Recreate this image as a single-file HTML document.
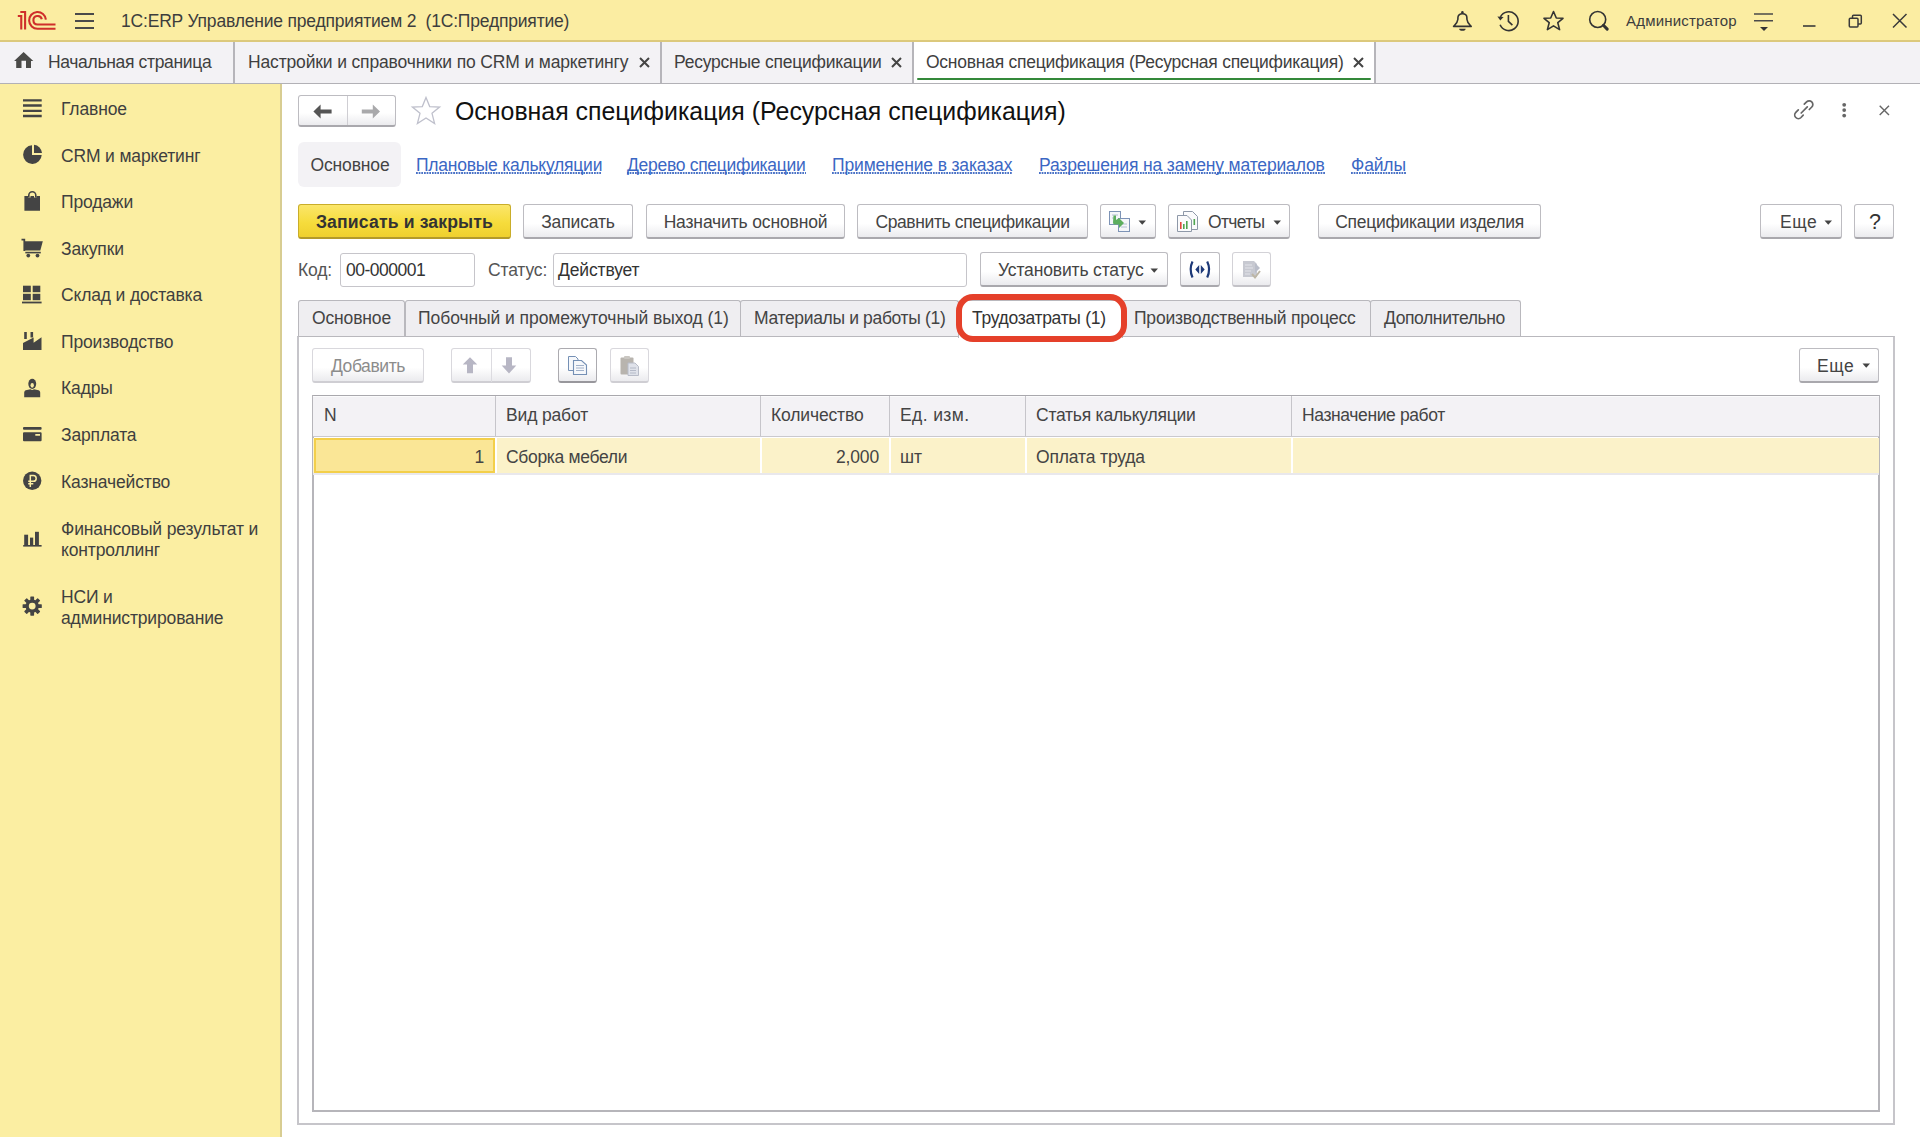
<!DOCTYPE html>
<html><head><meta charset="utf-8">
<style>
*{margin:0;padding:0;box-sizing:border-box}
html,body{width:1920px;height:1137px;overflow:hidden;background:#fff;font-family:"Liberation Sans",sans-serif;font-size:17px;color:#4a4a4a}
.a{position:absolute}
.t{position:absolute;white-space:pre;font-size:17.5px;letter-spacing:-0.15px;margin-top:1px}
svg{position:absolute;overflow:visible}
#top{left:0;top:0;width:1920px;height:42px;background:#fbeda2;border-bottom:2px solid #dcc97c}
#tabs{left:0;top:42px;width:1920px;height:42px;background:linear-gradient(#f3f2f5 0,#f3f2f5 40.7px,#b2b1b6 40.7px,#b2b1b6 42px)}
.sep{position:absolute;top:42px;width:2px;height:41px;background:#b6b5ba}
#side{left:0;top:84px;width:282px;height:1053px;background:#fbeea2;border-right:2px solid #d8cd92}
.sb{position:absolute;left:61px;font-size:17.5px;letter-spacing:-0.15px;margin-top:1px;color:#3f3f3f;white-space:pre;line-height:21px}
.btn{position:absolute;border:1px solid #bdbcc1;border-bottom:2px solid #a9a8ad;border-radius:3px;background:linear-gradient(#ffffff 0%,#ffffff 58%,#ebebee 100%);color:#444;white-space:pre;text-align:center}
.lnk{position:absolute;white-space:pre;color:#3b67c4;background-image:linear-gradient(to right,#4a72c6 50%,transparent 50%);background-size:2.67px 2px;background-repeat:repeat-x;background-position:0 21px}
.inp{position:absolute;border:1px solid #c6c5ca;border-radius:3px;background:#fff}
.ftab{position:absolute;top:300px;height:36px;border:1px solid #b9b8bd;border-bottom:none;border-radius:3px 3px 0 0;background:#efeef1;color:#4a4a4a;white-space:pre;line-height:34px;text-align:center}
.th{position:absolute;top:396px;height:40px;line-height:40px;color:#4a4a4a;white-space:pre}
.cd{position:absolute;width:1px;background:#cfced3}
</style></head><body>
<!-- TOP BAR -->
<div id="top" class="a"></div>
<svg style="left:0;top:0" width="62" height="40" viewBox="0 0 62 40">
  <g fill="none" stroke="#cf2f2a" stroke-width="2.1" stroke-linecap="butt">
    <path d="M17.8 16 H21.25 V29.5"/>
    <path d="M20.3 12 H25.1 V29.5"/>
    <path d="M45.9 19.6 A8.4 8.4 0 1 0 37.65 28.8 H55.5"/>
    <path d="M41.8 19.3 A4.25 4.25 0 1 0 37.5 24.5 H55.5"/>
  </g>
</svg>
<svg style="left:75px;top:13px" width="20" height="16" viewBox="0 0 20 16">
  <g stroke="#4a4a4a" stroke-width="1.8"><path d="M0 1H19M0 8H19M0 15H19"/></g>
</svg>
<div class="t" style="left:121px;top:0;line-height:40px;color:#3d3d3d;letter-spacing:-0.190px">1C:ERP Управление предприятием 2  (1С:Предприятие)</div>

<!-- top right icons -->
<svg style="left:1452px;top:10px" width="22" height="22" viewBox="0 0 22 22">
  <path d="M1.6 16.4 C3.6 14.2 5.6 12.6 5.9 9.2 V7.8 C5.9 5.2 7.6 3.8 10.4 3.8 C13.2 3.8 14.9 5.2 14.9 7.8 V9.2 C15.2 12.6 17.2 14.2 19.2 16.4 Z" fill="none" stroke="#333" stroke-width="1.6" stroke-linejoin="round"/>
  <path d="M7.2 18.7 H13.6 A3.2 2.1 0 0 1 7.2 18.7 Z" fill="#333"/>
  <circle cx="10.4" cy="2.4" r="1.3" fill="#333"/>
</svg>
<svg style="left:1497px;top:10px" width="23" height="22" viewBox="0 0 23 22">
  <path d="M3.4 6.9 A9.4 9.4 0 1 1 3.1 14.8" fill="none" stroke="#333" stroke-width="1.6"/>
  <path d="M0.4 6.4 L6.6 6.9 L3.3 10.4 Z" fill="#333"/>
  <path d="M11.4 5 V11.4 L15.4 15.2" fill="none" stroke="#333" stroke-width="1.6"/>
</svg>
<svg style="left:1542px;top:10px" width="23" height="22" viewBox="0 0 23 22">
  <path d="M11.5 1.5 L14.3 8 L21 8.3 L15.8 12.7 L17.6 19.6 L11.5 15.9 L5.4 19.6 L7.2 12.7 L2 8.3 L8.7 8 Z" fill="none" stroke="#333" stroke-width="1.6" stroke-linejoin="round"/>
</svg>
<svg style="left:1588px;top:10px" width="22" height="22" viewBox="0 0 22 22">
  <circle cx="9.7" cy="9.5" r="8" fill="none" stroke="#333" stroke-width="1.6"/>
  <path d="M15.4 15.3 L19.2 19.1" stroke="#333" stroke-width="3" stroke-linecap="round"/>
</svg>
<div class="t" style="left:1626px;top:0;line-height:40px;font-size:15px;letter-spacing:0.2px;color:#3d3d3d">Администратор</div>
<svg style="left:1754px;top:12px" width="20" height="20" viewBox="0 0 20 20">
  <path d="M0 2H19M0 8.8H19" stroke="#4a4a4a" stroke-width="1.6"/>
  <path d="M6 15 H14 L10 19 Z" fill="#333"/>
</svg>
<svg style="left:1803px;top:24px" width="14" height="4"><path d="M0 2H12.5" stroke="#3a3a3a" stroke-width="1.6"/></svg>
<svg style="left:1848px;top:14px" width="15" height="15" viewBox="0 0 15 15">
  <rect x="1.3" y="4.3" width="8.7" height="8.7" rx="1" fill="none" stroke="#3a3a3a" stroke-width="1.5"/>
  <path d="M4.5 4.3 V2.3 a1 1 0 0 1 1-1 H12.3 a1 1 0 0 1 1 1 V9 a1 1 0 0 1-1 1 H10" fill="none" stroke="#3a3a3a" stroke-width="1.5"/>
</svg>
<svg style="left:1892px;top:13px" width="16" height="16" viewBox="0 0 16 16">
  <path d="M1 1L14.5 14.5M14.5 1L1 14.5" stroke="#3a3a3a" stroke-width="1.5"/>
</svg>

<!-- TAB BAR -->
<div id="tabs" class="a"></div>
<div class="a" style="left:913px;top:42px;width:462px;height:40.7px;background:#fff"></div>
<div class="sep" style="left:233px"></div>
<div class="sep" style="left:660px"></div>
<div class="sep" style="left:912px"></div>
<div class="sep" style="left:1374px"></div>
<svg style="left:14px;top:51px" width="20" height="18" viewBox="0 0 20 18">
  <path d="M9.6 1.1 L19.3 10 H17 V16.9 H12 V9.8 H7.5 V16.9 H2.2 V10 H0.1 Z" fill="#4a4a48"/>
</svg>
<div class="t" style="left:48px;top:41px;line-height:40px;color:#3f3f3f;letter-spacing:-0.330px">Начальная страница</div>
<div class="t" style="left:248px;top:41px;line-height:40px;color:#3f3f3f">Настройки и справочники по CRM и маркетингу</div>
<div class="t" style="left:674px;top:41px;line-height:40px;color:#3f3f3f;letter-spacing:-0.23px">Ресурсные спецификации</div>
<div class="t" style="left:926px;top:41px;line-height:40px;color:#3f3f3f;letter-spacing:-0.257px">Основная спецификация (Ресурсная спецификация)</div>
<svg style="left:639px;top:57px" width="11" height="11" viewBox="0 0 11 11"><path d="M1 1L10 10M10 1L1 10" stroke="#444" stroke-width="2"/></svg>
<svg style="left:891px;top:57px" width="11" height="11" viewBox="0 0 11 11"><path d="M1 1L10 10M10 1L1 10" stroke="#444" stroke-width="2"/></svg>
<svg style="left:1353px;top:57px" width="11" height="11" viewBox="0 0 11 11"><path d="M1 1L10 10M10 1L1 10" stroke="#444" stroke-width="2"/></svg>
<div class="a" style="left:917px;top:77.5px;width:454px;height:2.6px;border-radius:2px;background:#34893a"></div>

<!-- SIDEBAR -->
<div id="side" class="a"></div>
<!-- Главное -->
<svg style="left:23px;top:98px" width="19" height="20" viewBox="0 0 19 20"><path d="M0 2.3H18.7M0 7.5H18.7M0 12.8H18.7M0 18H18.7" stroke="#444" stroke-width="2.3"/></svg>
<div class="sb" style="top:98px">Главное</div>
<!-- CRM -->
<svg style="left:22px;top:144px" width="21" height="21" viewBox="0 0 21 21">
  <path d="M10 1.3 A9.3 9.3 0 1 0 19.7 11 H10 Z" fill="#444"/>
  <path d="M12 0.7 A9 9 0 0 1 20 9 H12 Z" fill="#444"/>
</svg>
<div class="sb" style="top:145px">CRM и маркетинг</div>
<!-- Продажи -->
<svg style="left:24px;top:190px" width="17" height="22" viewBox="0 0 17 22">
  <path d="M0.4 6 H4 V7.5 H6.5 V6 H10 V7.5 H12.5 V6 H16 V20.7 H0.4 Z" fill="#444"/>
  <path d="M4.8 7.5 V5.3 A3.5 3.5 0 0 1 11.8 5.3 V7.5" fill="none" stroke="#444" stroke-width="1.6"/>
</svg>
<div class="sb" style="top:191px">Продажи</div>
<!-- Закупки -->
<svg style="left:21px;top:238px" width="23" height="21" viewBox="0 0 23 21">
  <path d="M0.5 1.6 H3.3 V13" fill="none" stroke="#444" stroke-width="1.8"/>
  <path d="M3.3 3.2 H21.8 L19.3 12.6 H3.3 Z" fill="#444"/>
  <path d="M4.3 14.6 H19.8" stroke="#444" stroke-width="1.6"/>
  <circle cx="7.3" cy="17.6" r="1.9" fill="#444"/><circle cx="16.5" cy="17.6" r="1.9" fill="#444"/>
</svg>
<div class="sb" style="top:238px">Закупки</div>
<!-- Склад -->
<svg style="left:22px;top:285px" width="21" height="19" viewBox="0 0 21 19">
  <rect x="1" y="0.7" width="7.8" height="6.5" fill="#444"/><rect x="10.7" y="0.7" width="7.6" height="6.5" fill="#444"/>
  <rect x="1" y="8.8" width="7.8" height="6.4" fill="#444"/><rect x="10.7" y="8.8" width="7.6" height="6.4" fill="#444"/>
  <path d="M0 17.5 H19.6" stroke="#444" stroke-width="1.8"/>
</svg>
<div class="sb" style="top:284px">Склад и доставка</div>
<!-- Производство -->
<svg style="left:22px;top:331px" width="21" height="20" viewBox="0 0 21 20">
  <rect x="2.2" y="1" width="2.6" height="7" fill="#444"/><rect x="8.5" y="1" width="2.6" height="5.5" fill="#444"/>
  <path d="M1 12 L11.6 6.4 V11.8 L19.5 6.3 V19 H1 Z" fill="#444"/>
</svg>
<div class="sb" style="top:331px">Производство</div>
<!-- Кадры -->
<svg style="left:23px;top:378px" width="19" height="20" viewBox="0 0 19 20">
  <ellipse cx="9.25" cy="5.8" rx="3.95" ry="5.1" fill="#444"/>
  <ellipse cx="9.2" cy="7.3" rx="1.7" ry="2.4" fill="#f7eaa2"/>
  <path d="M1.2 19.2 V14.6 Q1.2 12.3 4 11.9 L7.4 11.3 Q9.2 12.9 11 11.3 L14.4 11.9 Q17.2 12.3 17.2 14.6 V19.2 Z" fill="#444"/>
</svg>
<div class="sb" style="top:377px">Кадры</div>
<!-- Зарплата -->
<svg style="left:22px;top:426px" width="21" height="17" viewBox="0 0 21 17">
  <rect x="1" y="1" width="18.6" height="2.8" rx="1" fill="#444"/>
  <path d="M2 6.3 H18.6 A1 1 0 0 1 19.6 7.3 V14.3 A1 1 0 0 1 18.6 15.3 H2 A1 1 0 0 1 1 14.3 V7.3 A1 1 0 0 1 2 6.3 Z M13.3 8 V9.8 H18 V8 Z" fill="#444" fill-rule="evenodd"/>
</svg>
<div class="sb" style="top:424px">Зарплата</div>
<!-- Казначейство -->
<svg style="left:22px;top:471px" width="21" height="21" viewBox="0 0 21 21">
  <circle cx="10.2" cy="9.8" r="9.2" fill="#444"/>
  <path d="M8.3 16 V4.5 H11.3 A2.9 2.9 0 0 1 11.3 10.3 H6.2 M6.2 12.8 H11.3" fill="none" stroke="#fbeea2" stroke-width="1.5"/>
</svg>
<div class="sb" style="top:471px">Казначейство</div>
<!-- Финансовый -->
<svg style="left:22px;top:530px" width="21" height="18" viewBox="0 0 21 18">
  <rect x="2.2" y="4.7" width="3.9" height="10.8" fill="#444"/>
  <rect x="8" y="7.6" width="3.2" height="7.9" fill="#444"/>
  <rect x="13" y="1.8" width="3.9" height="13.7" fill="#444"/>
  <rect x="1.2" y="15" width="18.4" height="1.6" fill="#444"/>
</svg>
<div class="sb" style="top:518px">Финансовый результат и
контроллинг</div>
<!-- НСИ -->
<svg style="left:22px;top:596px" width="21" height="21" viewBox="0 0 21 21">
  <g fill="#444" transform="translate(10.2 10.1)">
    <circle r="6.6"/>
    <rect x="-1.9" y="-9.6" width="3.8" height="19.2" rx="0.6"/>
    <rect x="-1.9" y="-9.6" width="3.8" height="19.2" rx="0.6" transform="rotate(45)"/>
    <rect x="-1.9" y="-9.6" width="3.8" height="19.2" rx="0.6" transform="rotate(90)"/>
    <rect x="-1.9" y="-9.6" width="3.8" height="19.2" rx="0.6" transform="rotate(135)"/>
  </g>
  <circle cx="10.2" cy="10.1" r="3.4" fill="#fbeea2"/>
</svg>
<div class="sb" style="top:586px">НСИ и
администрирование</div>


<!-- FORM HEADER -->
<div class="btn" style="left:298px;top:95px;width:98px;height:32px"></div>
<div class="a" style="left:347px;top:96px;width:1px;height:29px;background:#cfced3"></div>
<svg style="left:313px;top:104px" width="20" height="15" viewBox="0 0 20 15"><path d="M0.4 7.5 L7.6 0.4 V5.4 H18.6 V9.6 H7.6 V14.6 Z" fill="#555"/></svg>
<svg style="left:361px;top:104px" width="20" height="15" viewBox="0 0 20 15"><path d="M19 7.5 L11.8 0.4 V5.4 H0.8 V9.6 H11.8 V14.6 Z" fill="#a9a9ab"/></svg>
<svg style="left:410px;top:96px" width="33" height="30" viewBox="0 0 33 30">
  <path d="M16 1.5 L19.7 10.6 L29.6 11 L22 17.3 L24.6 27.6 L16 22 L7.4 27.6 L10 17.3 L2.4 11 L12.3 10.6 Z" fill="none" stroke="#bfc0cc" stroke-width="1.3" stroke-linejoin="miter"/>
</svg>
<div class="t" style="left:455px;top:89.5px;line-height:40px;font-size:24.9px;letter-spacing:0;color:#111">Основная спецификация (Ресурсная спецификация)</div>
<svg style="left:1793px;top:99px" width="23" height="22" viewBox="0 0 23 22">
  <path d="M11.3 5.2 L13.6 2.9 A3.6 3.6 0 0 1 18.8 8 L16.3 10.5" fill="none" stroke="#666" stroke-width="1.7" stroke-linecap="round"/>
  <path d="M10.2 16.2 L8 18.5 A3.6 3.6 0 0 1 2.8 13.3 L5.3 10.8" fill="none" stroke="#666" stroke-width="1.7" stroke-linecap="round"/>
  <path d="M8.2 14 L14.3 7.9" stroke="#666" stroke-width="1.7" stroke-linecap="round"/>
</svg>
<svg style="left:1840px;top:101px" width="8" height="18" viewBox="0 0 8 18"><g fill="#666"><circle cx="4.2" cy="3.8" r="1.9"/><circle cx="4.2" cy="9.1" r="1.9"/><circle cx="4.2" cy="14.6" r="1.9"/></g></svg>
<svg style="left:1879px;top:105px" width="11" height="11" viewBox="0 0 11 11"><path d="M0.7 0.7L10 10M10 0.7L0.7 10" stroke="#666" stroke-width="1.4"/></svg>

<!-- section links -->
<div class="a" style="left:298px;top:142px;width:103px;height:45px;border-radius:6px;background:#f3f2f5"></div>
<div class="t" style="left:310.5px;top:144px;line-height:40px;color:#444">Основное</div>
<div class="lnk t" style="left:416px;top:144px;line-height:40px;background-position:0 27px;letter-spacing:-0.240px">Плановые калькуляции</div>
<div class="lnk t" style="left:627px;top:144px;line-height:40px;background-position:0 27px;letter-spacing:-0.290px">Дерево спецификации</div>
<div class="lnk t" style="left:832px;top:144px;line-height:40px;background-position:0 27px">Применение в заказах</div>
<div class="lnk t" style="left:1039px;top:144px;line-height:40px;background-position:0 27px">Разрешения на замену материалов</div>
<div class="lnk t" style="left:1351px;top:144px;line-height:40px;background-position:0 27px">Файлы</div>

<!-- command bar -->
<div class="btn" style="left:298px;top:204px;width:213px;height:35px;background:linear-gradient(#fbe66a 0%,#f6dc3c 55%,#efd02e 100%);border-color:#c9ad2a;border-bottom-color:#b39a2a"></div>
<div class="t" style="left:298px;top:205px;width:213px;line-height:33px;text-align:center;font-weight:bold;font-size:17.6px;color:#333;letter-spacing:0.150px">Записать и закрыть</div>
<div class="btn" style="left:523px;top:204px;width:110px;height:35px"></div>
<div class="t" style="left:523px;top:205px;width:110px;line-height:33px;text-align:center;color:#444">Записать</div>
<div class="btn" style="left:646px;top:204px;width:199px;height:35px"></div>
<div class="t" style="left:646px;top:205px;width:199px;line-height:33px;text-align:center;color:#444">Назначить основной</div>
<div class="btn" style="left:857px;top:204px;width:231px;height:35px"></div>
<div class="t" style="left:857px;top:205px;width:231px;line-height:33px;text-align:center;color:#444;letter-spacing:-0.375px">Сравнить спецификации</div>
<div class="btn" style="left:1100px;top:204px;width:56px;height:35px"></div>
<svg style="left:1108px;top:210px" width="24" height="23" viewBox="0 0 24 23">
  <rect x="1.5" y="1.5" width="11" height="13" fill="#f4f6fa" stroke="#7d93b6" stroke-width="1"/>
  <rect x="10.5" y="8.5" width="11" height="13" fill="#f4f6fa" stroke="#7d93b6" stroke-width="1"/>
  <path d="M13 14 h6 M13 17 h6 M4 5 h6 M4 8 h4" stroke="#a5b3c9" stroke-width="0.8"/>
  <path d="M5.5 5.5 L8 5.5 L8 10 L11 8 L16 13 L11 18 L11 14.5 L6.5 14.5 Q5 14.5 5 12.5 Z" fill="#5cae5e"/>
</svg>
<svg style="left:1138px;top:220px" width="9" height="6" viewBox="0 0 9 6"><path d="M0.5 0.5 H8 L4.25 4.8 Z" fill="#444"/></svg>
<div class="btn" style="left:1168px;top:204px;width:122px;height:35px"></div>
<svg style="left:1176px;top:210px" width="24" height="23" viewBox="0 0 24 23">
  <path d="M7.5 1.5 H16.5 L21.5 6.5 V19.5 H7.5 Z" fill="#fbfbfc" stroke="#8e98a8" stroke-width="1"/>
  <path d="M1.5 5.5 H11 L15.5 10 V21.5 H1.5 Z" fill="#fbfbfc" stroke="#8e98a8" stroke-width="1"/>
  <rect x="4" y="12" width="1.6" height="7" fill="#e2473a"/>
  <rect x="7" y="14" width="1.6" height="5" fill="#4fa64f"/>
  <rect x="10" y="11" width="1.6" height="8" fill="#4fa64f"/>
  <rect x="17.5" y="9" width="1.6" height="6" fill="#4fa64f"/>
</svg>
<div class="t" style="left:1208px;top:205px;line-height:33px;color:#444;letter-spacing:-0.690px">Отчеты</div>
<svg style="left:1273px;top:220px" width="9" height="6" viewBox="0 0 9 6"><path d="M0.5 0.5 H8 L4.25 4.8 Z" fill="#444"/></svg>
<div class="btn" style="left:1318px;top:204px;width:223px;height:35px"></div>
<div class="t" style="left:1318px;top:205px;width:223px;line-height:33px;text-align:center;color:#444;letter-spacing:-0.276px">Спецификации изделия</div>
<div class="btn" style="left:1760px;top:204px;width:82px;height:35px"></div>
<div class="t" style="left:1780px;top:205px;line-height:33px;color:#444;letter-spacing:0.6px">Еще</div>
<svg style="left:1824px;top:220px" width="9" height="6" viewBox="0 0 9 6"><path d="M0.5 0.5 H8 L4.25 4.8 Z" fill="#444"/></svg>
<div class="btn" style="left:1854px;top:204px;width:40px;height:35px"></div>
<div class="t" style="left:1855px;top:205px;width:40px;line-height:33px;text-align:center;color:#333;font-size:21.5px;letter-spacing:0">?</div>

<!-- fields -->
<div class="t" style="left:298px;top:252px;line-height:35px;color:#555">Код:</div>
<div class="inp" style="left:340px;top:253px;width:135px;height:34px"></div>
<div class="t" style="left:346px;top:252px;line-height:35px;color:#333;letter-spacing:-0.500px">00-000001</div>
<div class="t" style="left:488px;top:252px;line-height:35px;color:#555">Статус:</div>
<div class="inp" style="left:553px;top:253px;width:414px;height:34px"></div>
<div class="t" style="left:558px;top:252px;line-height:35px;color:#333">Действует</div>
<div class="btn" style="left:980px;top:252px;width:188px;height:35px"></div>
<div class="t" style="left:998px;top:253px;line-height:33px;color:#444">Установить статус</div>
<svg style="left:1150px;top:268px" width="9" height="6" viewBox="0 0 9 6"><path d="M0.5 0.5 H8 L4.25 4.8 Z" fill="#444"/></svg>
<div class="btn" style="left:1180px;top:252px;width:40px;height:35px"></div>
<svg style="left:1188px;top:260px" width="24" height="19" viewBox="0 0 24 19">
  <path d="M4.5 1.5 Q0.8 9.3 4.5 17.5 M19.2 1.5 Q23 9.3 19.2 17.5" fill="none" stroke="#1d3978" stroke-width="2.2"/>
  <path d="M11.2 5 L7.3 9.5 L11.2 14 Z M12.8 5 L16.7 9.5 L12.8 14 Z" fill="#1d3978"/>
</svg>
<div class="btn" style="left:1232px;top:252px;width:39px;height:35px;border-color:#d3d2d7;border-bottom-color:#c3c2c7"></div>
<svg style="left:1241px;top:259px" width="21" height="21" viewBox="0 0 21 21">
  <path d="M2 2 H13 L16 5 V18 H2 Z" fill="#c7c9d1"/>
  <path d="M4 6 H11 M4 9 H12 M4 12 H10 M4 15 H9" stroke="#e3e4ea" stroke-width="1"/>
  <path d="M14 4 L19 9 L14 14 Z" fill="#b9bdc9"/>
  <path d="M11 15 L14 18.5 L19 12" fill="none" stroke="#bdb6a6" stroke-width="2"/>
</svg>

<!-- form tabs -->
<div class="a" style="left:297px;top:336px;width:1598px;height:789px;border:2px solid #c6c5ca;border-top:1px solid #b9b8bd"></div>
<div class="ftab" style="left:298px;width:107px"></div>
<div class="t" style="left:312px;top:300px;line-height:34px;color:#444">Основное</div>
<div class="ftab" style="left:405px;width:336px"></div>
<div class="t" style="left:418px;top:300px;line-height:34px;color:#444;letter-spacing:-0.065px">Побочный и промежуточный выход (1)</div>
<div class="ftab" style="left:740px;width:219px"></div>
<div class="t" style="left:754px;top:300px;line-height:34px;color:#444;letter-spacing:-0.340px">Материалы и работы (1)</div>
<div class="ftab" style="left:958px;width:165px;height:38px;background:#fff"></div>
<div class="t" style="left:972px;top:300px;line-height:34px;color:#333;letter-spacing:-0.300px">Трудозатраты (1)</div>
<div class="ftab" style="left:1122px;width:249px"></div>
<div class="t" style="left:1134px;top:300px;line-height:34px;color:#444;letter-spacing:-0.210px">Производственный процесс</div>
<div class="ftab" style="left:1370px;width:151px"></div>
<div class="t" style="left:1384px;top:300px;line-height:34px;color:#444;letter-spacing:-0.390px">Дополнительно</div>
<div class="a" style="left:955.5px;top:293.5px;width:171px;height:48px;border:6.5px solid #e5402a;border-radius:17px"></div>

<!-- toolbar -->
<div class="btn" style="left:312px;top:348px;width:112px;height:35px;border-color:#d9d8dd;border-bottom-color:#cfced3"></div>
<div class="t" style="left:312px;top:348px;width:112px;line-height:34px;text-align:center;color:#8c8c8c;letter-spacing:-0.390px">Добавить</div>
<div class="btn" style="left:451px;top:348px;width:80px;height:35px;border-color:#d9d8dd;border-bottom-color:#cfced3"></div>
<div class="a" style="left:491px;top:349px;width:1px;height:33px;background:#dcdbe0"></div>
<svg style="left:462px;top:357px" width="16" height="17" viewBox="0 0 16 17"><path d="M8 0.3 L15.3 7.5 H11 V16.3 H5 V7.5 H0.7 Z" fill="#b7b6c4"/></svg>
<svg style="left:501px;top:357px" width="16" height="17" viewBox="0 0 16 17"><path d="M8 16.5 L15.3 8.5 H11 V0.3 H5 V8.5 H0.7 Z" fill="#b7b6c4"/></svg>
<div class="btn" style="left:558px;top:348px;width:39px;height:35px;border-color:#acabb0;border-bottom-color:#98979c"></div>
<svg style="left:567px;top:355px" width="21" height="21" viewBox="0 0 21 21">
  <path d="M1.5 1.5 H8.5 L11 4 V15.5 H1.5 Z" fill="#f6f8fb" stroke="#7590b5" stroke-width="1"/>
  <path d="M6.5 5.5 H14.5 L19.5 10 V19.5 H6.5 Z" fill="#f6f8fb" stroke="#7590b5" stroke-width="1.1"/>
  <path d="M9 10.5 H17 M9 13 H17 M9 15.5 H17" stroke="#98a9c4" stroke-width="0.9"/>
</svg>
<div class="btn" style="left:610px;top:348px;width:39px;height:35px;border-color:#d9d8dd;border-bottom-color:#cfced3"></div>
<svg style="left:619px;top:355px" width="21" height="22" viewBox="0 0 21 22">
  <rect x="1.5" y="2.5" width="13" height="17" rx="1" fill="#b8b4ae"/>
  <rect x="5" y="1" width="6" height="3" rx="1" fill="#c9c6c1"/>
  <path d="M9 8 H16 L19.5 11.5 V20.5 H9 Z" fill="#dfe2ea" stroke="#b8bcc8" stroke-width="1"/>
  <path d="M11 13 H17 M11 15.5 H17 M11 18 H17" stroke="#b0b5c4" stroke-width="0.9"/>
</svg>
<div class="btn" style="left:1799px;top:348px;width:80px;height:35px"></div>
<div class="t" style="left:1817px;top:348px;line-height:34px;color:#444;letter-spacing:0.6px">Еще</div>
<svg style="left:1862px;top:363px" width="9" height="6" viewBox="0 0 9 6"><path d="M0.5 0.5 H8 L4.25 4.8 Z" fill="#444"/></svg>

<!-- table -->
<div class="a" style="left:312px;top:395px;width:1568px;height:717px;border:2px solid #b6b5ba;border-top:1px solid #a9a8ad"></div>
<div class="a" style="left:313px;top:396px;width:1566px;height:41px;background:#f3f2f5;border-top:1px solid #fbfbfc;border-bottom:1px solid #cac9ce"></div>
<div class="a" style="left:313px;top:438px;width:1566px;height:37px;background:#fbf2c9;border-bottom:2px solid #e9e8ec"></div>
<div class="a" style="left:314px;top:438px;width:181px;height:35px;background:#fae696;border:2px solid #f3cf4a"></div>
<div class="cd" style="left:495px;top:396px;height:40px;width:1px;background:#c6c5ca"></div>
<div class="a" style="left:495px;top:438px;width:1.5px;height:35px;background:#fff"></div>
<div class="cd" style="left:760px;top:396px;height:40px;width:1px;background:#c6c5ca"></div>
<div class="a" style="left:760px;top:438px;width:1.5px;height:35px;background:#fff"></div>
<div class="cd" style="left:889px;top:396px;height:40px;width:1px;background:#c6c5ca"></div>
<div class="a" style="left:889px;top:438px;width:1.5px;height:35px;background:#fff"></div>
<div class="cd" style="left:1025px;top:396px;height:40px;width:1px;background:#c6c5ca"></div>
<div class="a" style="left:1025px;top:438px;width:1.5px;height:35px;background:#fff"></div>
<div class="cd" style="left:1291px;top:396px;height:40px;width:1px;background:#c6c5ca"></div>
<div class="a" style="left:1291px;top:438px;width:1.5px;height:35px;background:#fff"></div>
<div class="t" style="left:324px;top:394px;line-height:40px;color:#444">N</div>
<div class="t" style="left:506px;top:394px;line-height:40px;color:#444">Вид работ</div>
<div class="t" style="left:771px;top:394px;line-height:40px;color:#444">Количество</div>
<div class="t" style="left:900px;top:394px;line-height:40px;color:#444;letter-spacing:0.390px">Ед. изм.</div>
<div class="t" style="left:1036px;top:394px;line-height:40px;color:#444;letter-spacing:-0.240px">Статья калькуляции</div>
<div class="t" style="left:1302px;top:394px;line-height:40px;color:#444;letter-spacing:-0.380px">Назначение работ</div>
<div class="t" style="left:314px;top:437px;width:170px;text-align:right;line-height:38px;color:#444">1</div>
<div class="t" style="left:506px;top:437px;line-height:38px;color:#444;letter-spacing:-0.317px">Сборка мебели</div>
<div class="t" style="left:761px;top:437px;width:118px;text-align:right;line-height:38px;color:#444">2,000</div>
<div class="t" style="left:900px;top:437px;line-height:38px;color:#444">шт</div>
<div class="t" style="left:1036px;top:437px;line-height:38px;color:#444">Оплата труда</div>

</body></html>
